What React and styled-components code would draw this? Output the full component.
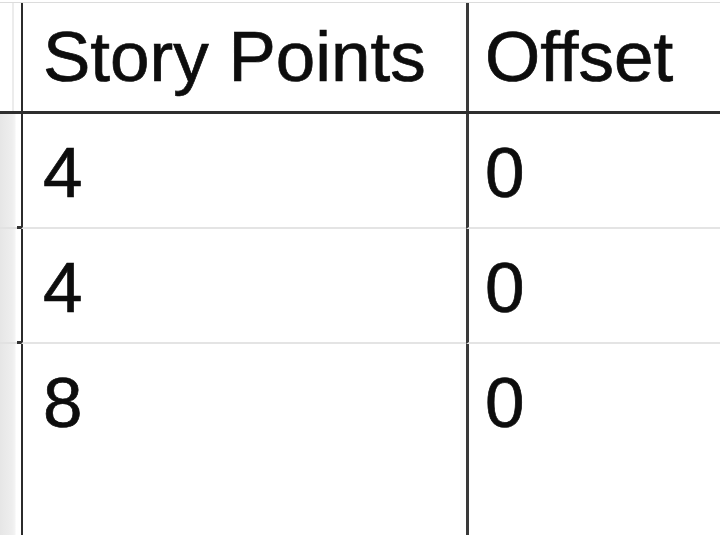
import React from "react";
import styled, { createGlobalStyle } from "styled-components";

const Global = createGlobalStyle`
  html, body { margin: 0; padding: 0; background: #fff; overflow: hidden; }
  body { font-family: "Liberation Sans", Arial, Helvetica, sans-serif; }
`;

const Sheet = styled.div`
  width: 720px;
  height: 535px;
  overflow: hidden;
  padding-top: 2px;
  box-sizing: border-box;
  background: #fff;
  display: flex;
  flex-direction: column;
`;

const Row = styled.div`
  display: flex;
  flex: ${(p) => (p.$last ? "1" : "none")};
  height: ${(p) => (p.$header ? "112px" : p.$last ? "auto" : "115px")};
  box-sizing: border-box;
  border-top: ${(p) => (p.$header ? "1px solid #dcdcdc" : "none")};
  border-bottom: ${(p) => (p.$header ? "3px solid #2e2e2e" : "0")};
`;

const Gutter = styled.div`
  width: 21px;
  flex: none;
  box-sizing: border-box;
  display: flex;
  flex-direction: column;
  justify-content: flex-end;
  align-items: flex-end;
  background: ${(p) =>
    p.$header
      ? "linear-gradient(to right, #fff 0 12px, #ececec 12px 14px, #fff 14px)"
      : "linear-gradient(to right, #e6e6e6 0, #eeeeee 12px, #f4f4f4 15px, #fff 16px)"};
  border-bottom: ${(p) => (p.$header || p.$last ? "none" : "2px solid #e2e2e2")};
`;

const Tick = styled.span`
  display: block;
  width: 4px;
  height: 3px;
  margin-bottom: -2px;
  background: #333;
`;

const Cell = styled.div`
  box-sizing: border-box;
  width: ${(p) => p.$w || "auto"};
  flex: ${(p) => (p.$w ? "none" : "1")};
  border-left: ${(p) => (p.$first ? "2px solid #2b2b2b" : "3px solid #3a3a3a")};
  padding-left: ${(p) => (p.$first ? "20px" : "16px")};
  padding-top: ${(p) => (p.$header ? "19px" : "24px")};
  border-bottom: ${(p) => (p.$header || p.$last ? "none" : "2px solid #e4e4e4")};
  font-size: 71px;
  line-height: 70px;
  color: #0d0d0d;
  -webkit-text-stroke: 0.7px #0d0d0d;
  white-space: nowrap;
  overflow: hidden;
`;

const rows = [
  ["4", "0"],
  ["4", "0"],
  ["8", "0"],
];

export default function App() {
  return (
    <>
      <Global />
      <Sheet>
        <Row $header>
          <Gutter $header />
          <Cell $first $header $w="445px">Story Points</Cell>
          <Cell $header>Offset</Cell>
        </Row>
        {rows.map((r, i) => {
          const last = i === rows.length - 1;
          return (
            <Row key={i} $last={last}>
              <Gutter $last={last}>{!last && <Tick />}</Gutter>
              <Cell $first $w="445px" $last={last}>{r[0]}</Cell>
              <Cell $last={last}>{r[1]}</Cell>
            </Row>
          );
        })}
      </Sheet>
    </>
  );
}
